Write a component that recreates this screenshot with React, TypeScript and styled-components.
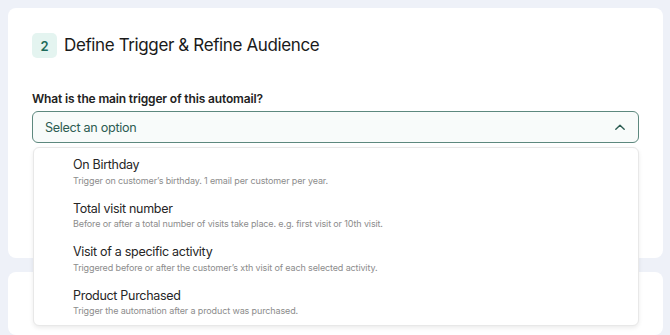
import { createGlobalStyle } from "styled-components";
import styled from "styled-components";

const GlobalStyle = createGlobalStyle`
  html, body {
    margin: 0;
    padding: 0;
    background: #eef1f8;
    font-family: Inter, "Open Sans", sans-serif;
    overflow: hidden;
  }
`;

const Page = styled.main`
  display: flex;
  flex-direction: column;
  gap: 14px;
  padding: 8px 7px 0 8px;
  height: 335px;
  box-sizing: border-box;
`;

const Card = styled.section<{ $height: number }>`
  background: #fff;
  border-radius: 8px;
  height: ${(p) => p.$height}px;
  padding: 25px 24px 0 24px;
  box-sizing: border-box;
  flex-shrink: 0;
`;

const Header = styled.div`
  display: flex;
  align-items: center;
  gap: 7px;
  height: 25px;
`;

const StepBadge = styled.span`
  display: flex;
  align-items: center;
  justify-content: center;
  width: 25px;
  height: 25px;
  border-radius: 5px;
  background: #e4f4f0;
  color: #1e6b5a;
  font-size: 13px;
  font-weight: 600;
`;

const Title = styled.h2`
  margin: 0;
  font-size: 17px;
  line-height: 25px;
  font-weight: 400;
  color: #1a1a1a;
  letter-spacing: -0.38px;
`;

const Field = styled.div`
  position: relative;
  margin-top: 33px;
`;

const Label = styled.label`
  display: block;
  font-size: 12px;
  line-height: 15px;
  font-weight: 600;
  color: #222;
  letter-spacing: -0.15px;
  margin-bottom: 5px;
`;

const Select = styled.button`
  display: flex;
  align-items: center;
  justify-content: space-between;
  width: 100%;
  height: 32px;
  padding: 0 12px 0 12px;
  box-sizing: border-box;
  border: 1px solid #5d887e;
  border-radius: 6px;
  background: #f8fbfa;
  color: #2c5c52;
  font-family: inherit;
  font-size: 12.6px;
  letter-spacing: -0.3px;
  text-align: left;
`;

const Menu = styled.ul`
  position: absolute;
  top: 56px;
  left: 1px;
  right: 0;
  margin: 0;
  padding: 9px 0 8px 39px;
  list-style: none;
  background: #fff;
  border: 1px solid #e8e8e8;
  border-radius: 6px;
  box-shadow: 0 2px 4px rgba(0, 0, 0, 0.08);
  display: flex;
  flex-direction: column;
  gap: 14px;
`;

const Option = styled.li`
  display: flex;
  flex-direction: column;
  gap: 1.5px;
`;

const OptionTitle = styled.span`
  font-size: 12.5px;
  line-height: 16px;
  letter-spacing: -0.3px;
  color: #262626;
`;

const OptionDesc = styled.span`
  font-size: 9px;
  line-height: 12px;
  letter-spacing: -0.13px;
  color: #8c8c8c;
`;

const options = [
  {
    title: "On Birthday",
    desc: "Trigger on customer’s birthday. 1 email per customer per year.",
  },
  {
    title: "Total visit number",
    desc: "Before or after a total number of visits take place. e.g. first visit or 10th visit.",
  },
  {
    title: "Visit of a specific activity",
    desc: "Triggered before or after the customer’s xth visit of each selected activity.",
  },
  {
    title: "Product Purchased",
    desc: "Trigger the automation after a product was purchased.",
  },
];

const Chevron = () => (
  <svg width="12" height="8" viewBox="0 0 12 8" fill="none">
    <path d="M1.8 6.2L6 2.2L10.2 6.2" stroke="#2c5c52" strokeWidth="1.4" strokeLinecap="round" strokeLinejoin="round" />
  </svg>
);

export default function App() {
  return (
    <>
      <GlobalStyle />
      <Page>
        <Card $height={250}>
          <Header>
            <StepBadge>2</StepBadge>
            <Title>Define Trigger &amp; Refine Audience</Title>
          </Header>
          <Field>
            <Label>What is the main trigger of this automail?</Label>
            <Select type="button">
              Select an option
              <Chevron />
            </Select>
            <Menu>
              {options.map((o) => (
                <Option key={o.title}>
                  <OptionTitle>{o.title}</OptionTitle>
                  <OptionDesc>{o.desc}</OptionDesc>
                </Option>
              ))}
            </Menu>
          </Field>
        </Card>
        <Card $height={63} />
      </Page>
    </>
  );
}
